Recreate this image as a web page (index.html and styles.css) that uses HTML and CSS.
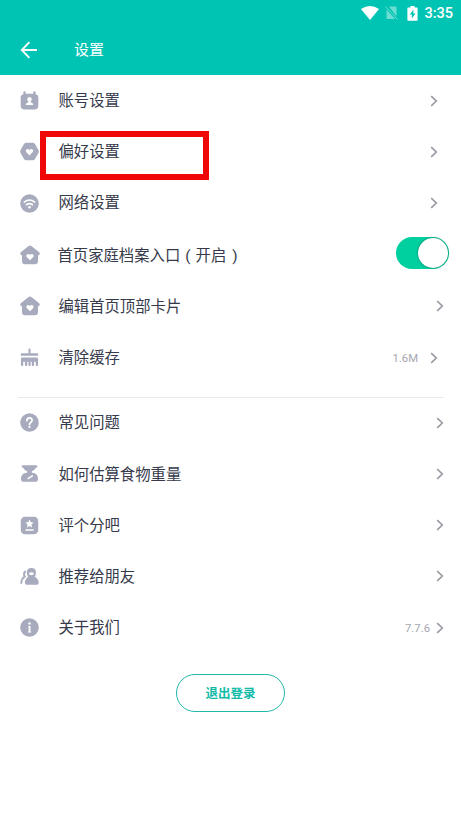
FILE: index.html
```html
<!DOCTYPE html>
<html lang="zh-CN">
<head>
<meta charset="utf-8">
<title>设置</title>
<link rel="stylesheet" href="styles.css">
</head>
<body>
<svg width="0" height="0" class="defs">
  <symbol id="chevron" viewBox="0 0 8 12"><path d="M1.2 1.2 6.3 6 1.2 10.8" fill="none" stroke="currentColor" stroke-width="1.6"/></symbol>
  <symbol id="home" viewBox="0 0 20 20"><path d="M8.300 1.200q1.700-1.200 3.400 0l7.500 6q1.500 2.200-.7 3H18v5.800q0 3.200-3.200 3.200H5.200Q2 19.200 2 16V10.200H1.500q-2.200-.8-.7-3z" fill="currentColor"/><path d="M10 15.300 6.700 12.100c-1.400-2.400 1.700-4.200 3.300-2 1.600-2.200 4.700-.4 3.300 2z" fill="#fff"/></symbol>
</svg>
<header class="header">
  <div class="status">
    <svg class="wifi" width="20" height="16" viewBox="0 0 20 16"><path d="M1 4Q10-2.200 19 4L10 15z" fill="#fff"/></svg>
    <svg class="sim" width="13" height="14" viewBox="0 0 13 14"><path d="M4 .5h7.500v10zM1.500 3.500 10 13H1.500z" fill="#fff" opacity=".42"/><path d="M.5.500 12.500 13.500" stroke="#fff" stroke-opacity=".42"/></svg>
    <svg class="battery" width="11" height="15" viewBox="0 0 11 15"><path d="M3.500 0h4v1.500H10q.6 0 .6.700V14q0 .8-.7.800H1.100q-.7 0-.7-.8V2.200q0-.7.600-.7h2.500z" fill="#fff"/><path d="M6.500 3.500 2.800 8.500h2v4L8.500 7.500H6.300z" fill="#00c4b3"/></svg>
    <span>3:35</span>
  </div>
  <div class="bar">
    <svg class="back" width="18" height="18" viewBox="0 0 18 18"><path d="M9.400 1.200 1.800 9l7.600 7.800M2 9h15" fill="none" stroke="#fff" stroke-width="1.900"/></svg>
    <h1>设置</h1>
  </div>
</header>
<main>
  <section class="group">
    <div class="row">
      <svg class="icon" viewBox="0 0 20 20"><path d="M3.500 1.500q0-1.200 1.200-1.200T6 1.500V3h8V1.500Q14 .3 15.300.3t1.200 1.200v2Q19.300 4 19.300 7v8q0 4.500-4 4.500H4.700q-4 0-4-4.500V7q0-3 2.800-3.500z" fill="currentColor"/><circle cx="10" cy="8.700" r="2.300" fill="#fff"/><path d="M9 10h2l.3 1.800q2.700.6 2.700 3H6q0-2.400 2.700-3z" fill="#fff"/></svg>
      <span class="label">账号设置</span><svg class="chev inset"><use href="#chevron"/></svg>
    </div>
    <div class="row marked">
      <svg class="icon" viewBox="0 0 20 20"><path d="M6.500 .7h7q1.500 0 2.300 1.300l3.600 6.500q.8 1.500 0 3l-3.600 6.500q-.8 1.300-2.300 1.300h-7Q5 19.300 4.200 18L.6 11.500q-.8-1.500 0-3L4.200 2Q5 .7 6.500 .7z" fill="currentColor"/><path d="M10 14.200 6.500 10.600c-1.600-2.500 1.700-4.500 3.500-2.100 1.800-2.400 5.100-.4 3.500 2.100z" fill="#fff"/></svg>
      <span class="label">偏好设置</span><svg class="chev inset"><use href="#chevron"/></svg>
    </div>
    <div class="row">
      <svg class="icon" viewBox="0 0 20 20"><circle cx="10" cy="10" r="9.800" fill="currentColor"/><path d="M4.500 8.500q5.500-4.300 11 0M6.800 11.300q3.200-2.400 6.400 0" fill="none" stroke="#fff" stroke-width="1.700" stroke-linecap="round"/><circle cx="10" cy="13.900" r="1.400" fill="#fff"/></svg>
      <span class="label raised">网络设置</span><svg class="chev inset"><use href="#chevron"/></svg>
    </div>
    <div class="row toggle-row">
      <svg class="icon house"><use href="#home"/></svg>
      <span class="label">首页家庭档案入口<span class="paren">(</span>开启<span class="paren close">)</span></span><span class="switch"><span class="knob"></span></span>
    </div>
    <div class="row">
      <svg class="icon house"><use href="#home"/></svg>
      <span class="label lowered">编辑首页顶部卡片</span><svg class="chev"><use href="#chevron"/></svg>
    </div>
    <div class="row">
      <svg class="icon" viewBox="0 0 20 20"><path d="M8.900 1.500q0-1 1.100-1t1.100 1V5.500H18q1.300 0 1.300 1.300T18 8.100H2Q.7 8.100.7 6.800T2 5.500h6.900zM2.500 10h15q1.500 0 1.500 1.500V18q0 1.200-1.200 1.200T16.600 18v-3.500h-1.800V18q0 1.200-1.200 1.200T12.400 18v-3.500H11.200V18q0 1.200-1.200 1.200T8.800 18v-3.500H7.600V18q0 1.200-1.200 1.200T5.200 18v-3.500H3.400V18q0 1.200-1.200 1.200T1 18v-6.500Q1 10 2.500 10z" fill="currentColor"/></svg>
      <span class="label">清除缓存</span><span class="value">1.6M</span><svg class="chev inset lowered"><use href="#chevron"/></svg>
    </div>
  </section>
  <section class="group second">
    <div class="row">
      <svg class="icon" viewBox="0 0 20 20"><circle cx="10" cy="10" r="9.800" fill="currentColor"/><path d="M7.300 8q0-2.800 2.700-2.800T12.700 8Q12.700 9 11.300 10 10 10.800 10 12" fill="none" stroke="#fff" stroke-width="1.900" stroke-linecap="round"/><circle cx="10" cy="14.700" r="1.200" fill="#fff"/></svg>
      <span class="label">常见问题</span><svg class="chev lowered"><use href="#chevron"/></svg>
    </div>
    <div class="row">
      <svg class="icon" viewBox="0 0 20 20"><path d="M3 1.200h14q1.400 0 1.400 1.300 0 1.100-1.400 1.300-1.200 2.500-4.500 3.700v1.600q4.900.2 6 3.900 1.700 5.800-2.700 5.800H4.200q-4.400 0-2.700-5.800 1.100-3.700 6-3.900V7.500Q4.200 6.300 3 3.800 1.600 3.600 1.600 2.500 1.600 1.200 3 1.200z" fill="currentColor"/><path d="m8.800 15.200 4.200-2.700" stroke="#fff" stroke-width="1.700" stroke-linecap="round"/></svg>
      <span class="label lowered">如何估算食物重量</span><svg class="chev"><use href="#chevron"/></svg>
    </div>
    <div class="row">
      <svg class="icon" viewBox="0 0 20 20"><rect x=".8" y=".8" width="18.400" height="18.400" rx="4.500" fill="currentColor"/><path d="m10 3.800 1.300 2.700 3 .4-2.200 2.100.5 3-2.600-1.400L7.400 12l.5-3-2.200-2.100 3-.4z" fill="#fff"/><path d="M6.300 14.800h7.400" stroke="#fff" stroke-width="1.600" stroke-linecap="round"/></svg>
      <span class="label">评个分吧</span><svg class="chev"><use href="#chevron"/></svg>
    </div>
    <div class="row">
      <svg class="icon" viewBox="0 0 20 20"><path d="M7.200 6.300Q7 1 12 1t4.800 5.300q-.1 2.400-1.300 4 3.900 2 4.200 6.100 0 2.300-2 2.300H7.200q-2.100 0-2.100-2.300Q5.400 12.300 8.700 10.300 7.300 8.700 7.200 6.300z" fill="currentColor"/><path d="M9.300 6.200q2.700-1.200 5.400 0-.2 2.600-2.700 2.600T9.300 6.200z" fill="#fff"/><path d="M5.500 4.800Q3.200 7 5 10q-3.400 2.200-3.600 6.800" fill="none" stroke="currentColor" stroke-width="2" stroke-linecap="round"/></svg>
      <span class="label">推荐给朋友</span><svg class="chev"><use href="#chevron"/></svg>
    </div>
    <div class="row">
      <svg class="icon" viewBox="0 0 20 20"><circle cx="10" cy="10" r="9.800" fill="currentColor"/><circle cx="10" cy="5.800" r="1.300" fill="#fff"/><path d="M8.700 8.500h2.300v5.600h.8v1.200H8.300v-1.200h.8V9.700h-.4z" fill="#fff"/></svg>
      <span class="label">关于我们</span><span class="value version">7.7.6</span><svg class="chev"><use href="#chevron"/></svg>
    </div>
  </section>
  <button class="logout" type="button">退出登录</button>
</main>
</body>
</html>
```
FILE: styles.css
```css
*, *::after { box-sizing: border-box; }
body {
  margin: 0;
  min-height: 819px;
  background: #fff;
  color: #363a4b;
  font-family: Roboto, "Noto Sans CJK SC", sans-serif;
}
.defs { position: absolute; }
svg { display: block; flex: none; }
.header {
  height: 75px;
  background: #00c4b3;
  color: #fff;
}
.status {
  display: flex;
  align-items: center;
  justify-content: flex-end;
  height: 26px;
  padding-right: 8px;
  font-size: 14.5px;
  font-weight: 500;
}
.sim { margin-left: 5px; }
.battery { margin: 0 6px 0 9px; }
.bar {
  display: flex;
  align-items: center;
  height: 48px;
  padding-left: 20px;
}
.bar h1 {
  margin: -4px 0 0 36px;
  font-size: 15px;
  font-weight: 400;
}
.row {
  display: flex;
  align-items: center;
  height: 51.3px;
  padding: 0 17px 0 20px;
}
.icon {
  width: 19px;
  height: 19px;
  color: #a8abbd;
}
.icon.house {
  width: 20px;
  height: 20px;
  margin: 0 -.5px;
}
.label {
  flex: 1;
  margin: 1px 0 0 19.5px;
  font-size: 15.35px;
  line-height: 22px;
  white-space: nowrap;
}
.label.raised { margin-top: -1px; }
.label.lowered { margin-top: 3px; }
.chev {
  width: 8px;
  height: 12px;
  color: #989aa3;
}
.chev.inset { margin-right: 6px; }
.chev.lowered { margin-top: 2px; }
.value {
  margin: 2px 12px 0 0;
  color: #a5a7b1;
  font-size: 11.3px;
}
.value.version { margin-right: 6px; }
.marked { position: relative; }
.marked::after {
  content: "";
  position: absolute;
  left: 40px;
  top: 5px;
  width: 169px;
  height: 49px;
  border: 6px solid #f00808;
}
.toggle-row { padding-right: 12px; }
.toggle-row .label { margin: 2px 0 0 18.5px; }
.paren {
  display: inline-block;
  width: 15.35px;
  text-align: center;
}
.paren.close { padding-left: 2px; }
.switch {
  display: flex;
  justify-content: flex-end;
  width: 53px;
  height: 32px;
  margin-top: -4px;
  padding: 1px;
  border-radius: 16px;
  background: #00cfa0;
}
.knob {
  width: 30px;
  height: 30px;
  border-radius: 50%;
  background: #fff;
  box-shadow: 0 0 2px rgba(0, 50, 40, .7);
}
.group.second {
  position: relative;
  margin-top: 14px;
}
.group.second::before {
  content: "";
  position: absolute;
  left: 18px;
  right: 17px;
  top: 0;
  height: 1px;
  background: #e9e9ec;
}
.logout {
  display: block;
  width: 109px;
  height: 38px;
  margin: 20.500px auto 0;
  padding: 0;
  border: 1px solid #20b8a8;
  border-radius: 19px;
  background: #fff;
  color: #12bba9;
  font: 700 12.5px Roboto, "Noto Sans CJK SC", sans-serif;
}
```
